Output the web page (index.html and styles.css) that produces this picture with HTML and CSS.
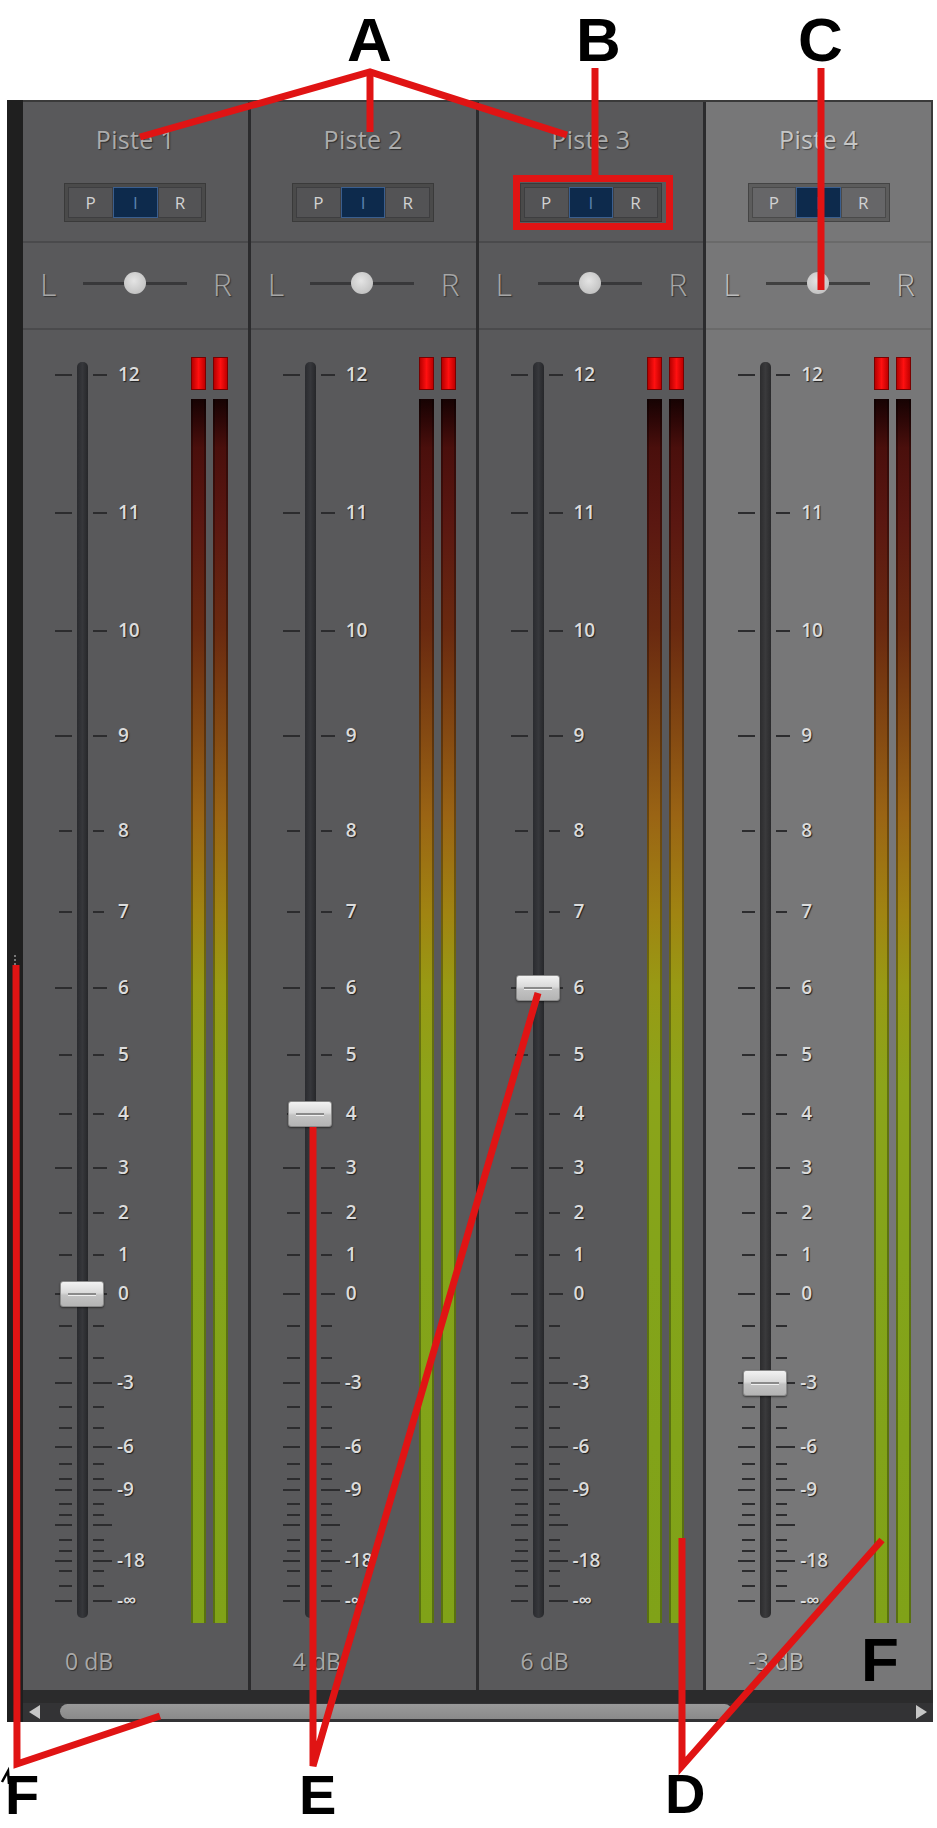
FILE: index.html
```html
<!DOCTYPE html>
<html lang="fr">
<head>
<meta charset="utf-8">
<title>Mixeur</title>
<link rel="stylesheet" href="styles.css">
</head>
<body>
<div class="page">
  <div class="panel">
    <div class="grip"><div class="dots"><i></i><i></i><i></i></div></div>
    <div class="main">
      <div class="tracks">

        <div class="col">
          <div class="head">
            <div class="name">Piste 1</div>
            <div class="pir"><span class="btn">P</span><span class="btn on">I</span><span class="btn">R</span></div>
          </div>
          <div class="pan"><span class="lr">L</span><span class="slider"><b></b></span><span class="lr">R</span></div>
          <div class="mix">
            <div class="row">
              <div class="fader">
                <div class="track"></div>
                <div class="tick big" style="top:45px"><i></i><i></i><span>12</span></div>
                <div class="tick big" style="top:183px"><i></i><i></i><span>11</span></div>
                <div class="tick big" style="top:301px"><i></i><i></i><span>10</span></div>
                <div class="tick big" style="top:406px"><i></i><i></i><span>9</span></div>
                <div class="tick" style="top:501px"><i></i><i></i><span>8</span></div>
                <div class="tick" style="top:582px"><i></i><i></i><span>7</span></div>
                <div class="tick big" style="top:658px"><i></i><i></i><span>6</span></div>
                <div class="tick" style="top:725px"><i></i><i></i><span>5</span></div>
                <div class="tick" style="top:784px"><i></i><i></i><span>4</span></div>
                <div class="tick big" style="top:838px"><i></i><i></i><span>3</span></div>
                <div class="tick" style="top:883px"><i></i><i></i><span>2</span></div>
                <div class="tick" style="top:925px"><i></i><i></i><span>1</span></div>
                <div class="tick big" style="top:964px"><i></i><i></i><span>0</span></div>
                <div class="tick" style="top:996px"><i></i><i></i></div>
                <div class="tick" style="top:1028px"><i></i><i></i></div>
                <div class="tick long" style="top:1053px"><i></i><i></i><span>-3</span></div>
                <div class="tick" style="top:1077px"><i></i><i></i></div>
                <div class="tick" style="top:1098px"><i></i><i></i></div>
                <div class="tick long" style="top:1117px"><i></i><i></i><span>-6</span></div>
                <div class="tick" style="top:1134px"><i></i><i></i></div>
                <div class="tick" style="top:1149px"><i></i><i></i></div>
                <div class="tick long" style="top:1160px"><i></i><i></i><span>-9</span></div>
                <div class="tick" style="top:1174px"><i></i><i></i></div>
                <div class="tick" style="top:1185px"><i></i><i></i></div>
                <div class="tick long" style="top:1195px"><i></i><i></i></div>
                <div class="tick" style="top:1210px"><i></i><i></i></div>
                <div class="tick" style="top:1221px"><i></i><i></i></div>
                <div class="tick long" style="top:1231px"><i></i><i></i><span>-18</span></div>
                <div class="tick" style="top:1241px"><i></i><i></i></div>
                <div class="tick" style="top:1256px"><i></i><i></i></div>
                <div class="tick long" style="top:1271px"><i></i><i></i><span>-∞</span></div>
                <div class="knob" style="top:964px"></div>
              </div>
              <div class="meters">
                <div class="meter"><div class="clip"></div><div class="bar"></div></div>
                <div class="meter"><div class="clip"></div><div class="bar"></div></div>
              </div>
            </div>
            <div class="db">0 dB</div>
          </div>
        </div>

        <div class="col">
          <div class="head">
            <div class="name">Piste 2</div>
            <div class="pir"><span class="btn">P</span><span class="btn on">I</span><span class="btn">R</span></div>
          </div>
          <div class="pan"><span class="lr">L</span><span class="slider"><b></b></span><span class="lr">R</span></div>
          <div class="mix">
            <div class="row">
              <div class="fader">
                <div class="track"></div>
                <div class="tick big" style="top:45px"><i></i><i></i><span>12</span></div>
                <div class="tick big" style="top:183px"><i></i><i></i><span>11</span></div>
                <div class="tick big" style="top:301px"><i></i><i></i><span>10</span></div>
                <div class="tick big" style="top:406px"><i></i><i></i><span>9</span></div>
                <div class="tick" style="top:501px"><i></i><i></i><span>8</span></div>
                <div class="tick" style="top:582px"><i></i><i></i><span>7</span></div>
                <div class="tick big" style="top:658px"><i></i><i></i><span>6</span></div>
                <div class="tick" style="top:725px"><i></i><i></i><span>5</span></div>
                <div class="tick" style="top:784px"><i></i><i></i><span>4</span></div>
                <div class="tick big" style="top:838px"><i></i><i></i><span>3</span></div>
                <div class="tick" style="top:883px"><i></i><i></i><span>2</span></div>
                <div class="tick" style="top:925px"><i></i><i></i><span>1</span></div>
                <div class="tick big" style="top:964px"><i></i><i></i><span>0</span></div>
                <div class="tick" style="top:996px"><i></i><i></i></div>
                <div class="tick" style="top:1028px"><i></i><i></i></div>
                <div class="tick long" style="top:1053px"><i></i><i></i><span>-3</span></div>
                <div class="tick" style="top:1077px"><i></i><i></i></div>
                <div class="tick" style="top:1098px"><i></i><i></i></div>
                <div class="tick long" style="top:1117px"><i></i><i></i><span>-6</span></div>
                <div class="tick" style="top:1134px"><i></i><i></i></div>
                <div class="tick" style="top:1149px"><i></i><i></i></div>
                <div class="tick long" style="top:1160px"><i></i><i></i><span>-9</span></div>
                <div class="tick" style="top:1174px"><i></i><i></i></div>
                <div class="tick" style="top:1185px"><i></i><i></i></div>
                <div class="tick long" style="top:1195px"><i></i><i></i></div>
                <div class="tick" style="top:1210px"><i></i><i></i></div>
                <div class="tick" style="top:1221px"><i></i><i></i></div>
                <div class="tick long" style="top:1231px"><i></i><i></i><span>-18</span></div>
                <div class="tick" style="top:1241px"><i></i><i></i></div>
                <div class="tick" style="top:1256px"><i></i><i></i></div>
                <div class="tick long" style="top:1271px"><i></i><i></i><span>-∞</span></div>
                <div class="knob" style="top:784px"></div>
              </div>
              <div class="meters">
                <div class="meter"><div class="clip"></div><div class="bar"></div></div>
                <div class="meter"><div class="clip"></div><div class="bar"></div></div>
              </div>
            </div>
            <div class="db">4 dB</div>
          </div>
        </div>

        <div class="col">
          <div class="head">
            <div class="name">Piste 3</div>
            <div class="pir"><span class="btn">P</span><span class="btn on">I</span><span class="btn">R</span></div>
          </div>
          <div class="pan"><span class="lr">L</span><span class="slider"><b></b></span><span class="lr">R</span></div>
          <div class="mix">
            <div class="row">
              <div class="fader">
                <div class="track"></div>
                <div class="tick big" style="top:45px"><i></i><i></i><span>12</span></div>
                <div class="tick big" style="top:183px"><i></i><i></i><span>11</span></div>
                <div class="tick big" style="top:301px"><i></i><i></i><span>10</span></div>
                <div class="tick big" style="top:406px"><i></i><i></i><span>9</span></div>
                <div class="tick" style="top:501px"><i></i><i></i><span>8</span></div>
                <div class="tick" style="top:582px"><i></i><i></i><span>7</span></div>
                <div class="tick big" style="top:658px"><i></i><i></i><span>6</span></div>
                <div class="tick" style="top:725px"><i></i><i></i><span>5</span></div>
                <div class="tick" style="top:784px"><i></i><i></i><span>4</span></div>
                <div class="tick big" style="top:838px"><i></i><i></i><span>3</span></div>
                <div class="tick" style="top:883px"><i></i><i></i><span>2</span></div>
                <div class="tick" style="top:925px"><i></i><i></i><span>1</span></div>
                <div class="tick big" style="top:964px"><i></i><i></i><span>0</span></div>
                <div class="tick" style="top:996px"><i></i><i></i></div>
                <div class="tick" style="top:1028px"><i></i><i></i></div>
                <div class="tick long" style="top:1053px"><i></i><i></i><span>-3</span></div>
                <div class="tick" style="top:1077px"><i></i><i></i></div>
                <div class="tick" style="top:1098px"><i></i><i></i></div>
                <div class="tick long" style="top:1117px"><i></i><i></i><span>-6</span></div>
                <div class="tick" style="top:1134px"><i></i><i></i></div>
                <div class="tick" style="top:1149px"><i></i><i></i></div>
                <div class="tick long" style="top:1160px"><i></i><i></i><span>-9</span></div>
                <div class="tick" style="top:1174px"><i></i><i></i></div>
                <div class="tick" style="top:1185px"><i></i><i></i></div>
                <div class="tick long" style="top:1195px"><i></i><i></i></div>
                <div class="tick" style="top:1210px"><i></i><i></i></div>
                <div class="tick" style="top:1221px"><i></i><i></i></div>
                <div class="tick long" style="top:1231px"><i></i><i></i><span>-18</span></div>
                <div class="tick" style="top:1241px"><i></i><i></i></div>
                <div class="tick" style="top:1256px"><i></i><i></i></div>
                <div class="tick long" style="top:1271px"><i></i><i></i><span>-∞</span></div>
                <div class="knob" style="top:658px"></div>
              </div>
              <div class="meters">
                <div class="meter"><div class="clip"></div><div class="bar"></div></div>
                <div class="meter"><div class="clip"></div><div class="bar"></div></div>
              </div>
            </div>
            <div class="db">6 dB</div>
          </div>
        </div>

        <div class="col sel">
          <div class="head">
            <div class="name">Piste 4</div>
            <div class="pir"><span class="btn">P</span><span class="btn on">I</span><span class="btn">R</span></div>
          </div>
          <div class="pan"><span class="lr">L</span><span class="slider"><b></b></span><span class="lr">R</span></div>
          <div class="mix">
            <div class="row">
              <div class="fader">
                <div class="track"></div>
                <div class="tick big" style="top:45px"><i></i><i></i><span>12</span></div>
                <div class="tick big" style="top:183px"><i></i><i></i><span>11</span></div>
                <div class="tick big" style="top:301px"><i></i><i></i><span>10</span></div>
                <div class="tick big" style="top:406px"><i></i><i></i><span>9</span></div>
                <div class="tick" style="top:501px"><i></i><i></i><span>8</span></div>
                <div class="tick" style="top:582px"><i></i><i></i><span>7</span></div>
                <div class="tick big" style="top:658px"><i></i><i></i><span>6</span></div>
                <div class="tick" style="top:725px"><i></i><i></i><span>5</span></div>
                <div class="tick" style="top:784px"><i></i><i></i><span>4</span></div>
                <div class="tick big" style="top:838px"><i></i><i></i><span>3</span></div>
                <div class="tick" style="top:883px"><i></i><i></i><span>2</span></div>
                <div class="tick" style="top:925px"><i></i><i></i><span>1</span></div>
                <div class="tick big" style="top:964px"><i></i><i></i><span>0</span></div>
                <div class="tick" style="top:996px"><i></i><i></i></div>
                <div class="tick" style="top:1028px"><i></i><i></i></div>
                <div class="tick long" style="top:1053px"><i></i><i></i><span>-3</span></div>
                <div class="tick" style="top:1077px"><i></i><i></i></div>
                <div class="tick" style="top:1098px"><i></i><i></i></div>
                <div class="tick long" style="top:1117px"><i></i><i></i><span>-6</span></div>
                <div class="tick" style="top:1134px"><i></i><i></i></div>
                <div class="tick" style="top:1149px"><i></i><i></i></div>
                <div class="tick long" style="top:1160px"><i></i><i></i><span>-9</span></div>
                <div class="tick" style="top:1174px"><i></i><i></i></div>
                <div class="tick" style="top:1185px"><i></i><i></i></div>
                <div class="tick long" style="top:1195px"><i></i><i></i></div>
                <div class="tick" style="top:1210px"><i></i><i></i></div>
                <div class="tick" style="top:1221px"><i></i><i></i></div>
                <div class="tick long" style="top:1231px"><i></i><i></i><span>-18</span></div>
                <div class="tick" style="top:1241px"><i></i><i></i></div>
                <div class="tick" style="top:1256px"><i></i><i></i></div>
                <div class="tick long" style="top:1271px"><i></i><i></i><span>-∞</span></div>
                <div class="knob" style="top:1053px"></div>
              </div>
              <div class="meters">
                <div class="meter"><div class="clip"></div><div class="bar"></div></div>
                <div class="meter"><div class="clip"></div><div class="bar"></div></div>
              </div>
            </div>
            <div class="db">-3 dB</div>
          </div>
        </div>

      </div>
      <div class="band"></div>
      <div class="scroll">
        <span class="arrow left"></span>
        <span class="thumb"></span>
        <span class="gap"></span>
        <span class="arrow right"></span>
      </div>
    </div>
  </div>

  <svg class="notes" width="937" height="1828" viewBox="0 0 937 1828">
    <g fill="none" stroke="#e01414" stroke-width="7" stroke-linejoin="miter" stroke-linecap="butt">
      <polyline points="140,137 370,72 567,135"/>
      <line x1="370" y1="72" x2="370" y2="132"/>
      <line x1="595" y1="68" x2="595" y2="176"/>
      <rect x="516.5" y="178.5" width="153" height="48"/>
      <line x1="821" y1="68" x2="821" y2="290"/>
      <polyline points="682,1538 682,1766 882,1540"/>
      <polyline points="313,1127 313,1766 538,993"/>
      <polyline points="16,965 17,1764 160,1716"/>
    </g>
    <path d="M2,1782 L8,1771 L9,1784" fill="none" stroke="#000" stroke-width="2.5"/>
  </svg>
  <div class="letter la">A</div>
  <div class="letter lb">B</div>
  <div class="letter lc">C</div>
  <div class="letter lf2">F</div>
  <div class="letter low lf1">F</div>
  <div class="letter low le">E</div>
  <div class="letter low ld">D</div>
</div>
</body>
</html>
```

FILE: styles.css
```css
* { box-sizing: border-box; }
html, body { margin: 0; padding: 0; background: #ffffff; }
body { font-family: "Open Sans", "DejaVu Sans", sans-serif; }

.page {
  position: relative;
  width: 937px;
  height: 1828px;
  overflow: hidden;
  padding: 100px 4px 0 7px;
}

.panel {
  display: flex;
  width: 926px;
  height: 1622px;
  background: #242424;
}

.grip {
  width: 16px;
  background: #1f1f1f;
  display: flex;
  flex-direction: column;
  align-items: center;
  padding-top: 855px;
}
.dots { display: flex; flex-direction: column; gap: 2px; }
.dots i { display: block; width: 2px; height: 2px; background: #777; }

.main {
  flex: 1;
  display: flex;
  flex-direction: column;
}

.tracks {
  display: flex;
  height: 1590px;
  border-top: 2px solid #3a3a3a;
}

.col {
  flex: 1;
  display: flex;
  flex-direction: column;
  background: #59595b;
  border-right: 3px solid #2b2b2d;
}
.col.sel { background: #777778; border-right: 2px solid #3a3a3a; }

.head {
  height: 141px;
  border-bottom: 2px solid #4a4a4c;
  display: flex;
  flex-direction: column;
  align-items: center;
  padding-top: 21px;
}
.col.sel .head { border-bottom-color: #6a6a6a; }

.name {
  font-size: 25px;
  line-height: 33px;
  color: #acacac;
  text-shadow: 1px 1px 1px #2e2e2e;
  letter-spacing: 0.3px;
}
.col.sel .name { color: #c6c6c6; text-shadow: 1px 1px 1px #444; }

.pir {
  margin-top: 27px;
  display: flex;
  width: 142px;
  height: 39px;
  padding: 3px;
  background: #4a4a4a;
  border: 1px solid #3a3a3a;
}
.col.sel .pir { background: #5c5c5c; border-color: #444; }
.btn {
  flex: 1;
  display: flex;
  align-items: center;
  justify-content: center;
  font-size: 17px;
  color: #d2d2d2;
  background: #535355;
  border: 1px solid #3e3e40;
}
.col.sel .btn { background: #666668; border-color: #4a4a4a; }
.btn.on, .col.sel .btn.on {
  background: #0d2a4c;
  border-color: #3a5e8e;
  color: #5a82b0;
}

.pan {
  height: 87px;
  border-bottom: 2px solid #4a4a4c;
  display: flex;
  align-items: center;
  justify-content: space-between;
  padding: 0 16px 4px 17px;
}
.col.sel .pan { border-bottom-color: #6a6a6a; }
.lr {
  font-size: 32px;
  font-weight: 300;
  color: #a6a6a6;
  line-height: 1;
  text-shadow: 1px 1px 1px #333;
}
.col.sel .lr { color: #bcbcbc; }
.slider {
  position: relative;
  width: 104px;
  height: 3px;
  background: #38383a;
}
.col.sel .slider { background: #404040; }
.slider b {
  position: absolute;
  left: 41px;
  top: -10px;
  width: 22px;
  height: 22px;
  border-radius: 50%;
  background: radial-gradient(circle at 45% 40%, #e4e4e4, #c4c4c4 70%, #a8a8a8);
}

.mix {
  flex: 1;
  display: flex;
  flex-direction: column;
  padding-left: 32px;
}
.row {
  display: flex;
  height: 1293px;
}

.fader {
  position: relative;
  width: 136px;
}
.track {
  margin: 32px 0 0 22px;
  width: 11px;
  height: 1256px;
  border-radius: 5px;
  background: linear-gradient(90deg, #2a2b2f, #36373b 50%, #26272a);
}
.col.sel .track { background: linear-gradient(90deg, #2c2c2e, #3a3a3c 50%, #2a2a2c); }

.tick {
  position: absolute;
  left: 0;
  width: 136px;
  height: 0;
}
.tick i {
  position: absolute;
  top: -1px;
  height: 2px;
  background: #2c2c2e;
}
.tick i:first-child { left: 4px; width: 13px; }
.tick i:nth-child(2) { left: 38px; width: 11px; }
.tick.big i:first-child { left: 0; width: 17px; }
.tick.big i:nth-child(2) { left: 38px; width: 14px; }
.tick.long i:first-child { left: 0; width: 17px; }
.tick.long i:nth-child(2) { left: 38px; width: 19px; }
.tick span {
  position: absolute;
  left: 63px;
  top: -14px;
  font-size: 19px;
  line-height: 26px;
  font-weight: 600;
  color: #dcdcdc;
  text-shadow: 1px 1px 1px #202020;
  white-space: nowrap;
}
.tick.long span { left: 62px; }

.knob {
  position: absolute;
  left: 5px;
  width: 44px;
  height: 26px;
  margin-top: -13px;
  border-radius: 3px;
  border: 1px solid #8a8a8a;
  background: linear-gradient(180deg, #f2f2f2 0%, #dadada 45%, #c2c2c2 55%, #b4b4b4 100%);
  box-shadow: 0 1px 2px rgba(0,0,0,0.5);
}
.knob::after {
  content: "";
  position: absolute;
  left: 7px;
  right: 7px;
  top: 11px;
  height: 2px;
  background: #8a8a8a;
  border-bottom: 1px solid #f0f0f0;
}

.meters {
  display: flex;
  gap: 7px;
}
.meter {
  width: 15px;
  display: flex;
  flex-direction: column;
  padding-top: 27px;
}
.clip {
  height: 33px;
  background: linear-gradient(90deg, #b80000, #ff1010 50%, #c00000);
  border: 1px solid #7a0000;
}
.bar {
  margin-top: 9px;
  flex: 1;
  background: linear-gradient(180deg,
    #160303 0%, #2a0606 1.5%, #4a0f0c 4%, #5a1711 10%,
    #6a2a10 19%, #834812 27%, #9a6414 34%,
    #a08412 42%, #989a14 48%, #8ca41a 56%, #84a41a 70%, #80a218 100%);
  box-shadow: inset 2px 0 0 rgba(0,0,0,0.3), inset -2px 0 0 rgba(0,0,0,0.3);
}

.db {
  margin-top: 23px;
  padding-left: 10px;
  font-size: 23px;
  line-height: 30px;
  color: #a8a8a8;
  text-shadow: 1px 1px 1px #2e2e2e;
}
.col.sel .db { color: #b9b9b9; }

.band {
  height: 13px;
  background: #2b2b2c;
}
.scroll {
  height: 19px;
  display: flex;
  align-items: center;
  background: #333335;
  padding: 0 6px 2px 6px;
}
.arrow {
  width: 0;
  height: 0;
  border-top: 7px solid transparent;
  border-bottom: 7px solid transparent;
}
.arrow.left { border-right: 11px solid #c6c6c6; margin-right: 20px; }
.arrow.right { border-left: 11px solid #c6c6c6; margin-left: 6px; }
.thumb {
  width: 672px;
  height: 15px;
  border-radius: 8px;
  background: linear-gradient(180deg, #9a9a9a, #8a8a8a);
}
.gap { flex: 1; }

.notes {
  position: absolute;
  left: 0;
  top: 0;
}

.letter {
  position: absolute;
  font-family: "Liberation Sans", Arial, sans-serif;
  font-weight: bold;
  font-size: 62px;
  line-height: 62px;
  color: #000;
}
.letter.low {
  font-size: 56px;
  line-height: 46px;
}
.la { left: 347px; top: 9px; }
.lb { left: 576px; top: 9px; }
.lc { left: 798px; top: 9px; }
.lf2 { left: 861px; top: 1629px; }
.lf1 { left: 5px; top: 1772px; }
.le { left: 299px; top: 1772px; }
.ld { left: 665px; top: 1771px; }
```
